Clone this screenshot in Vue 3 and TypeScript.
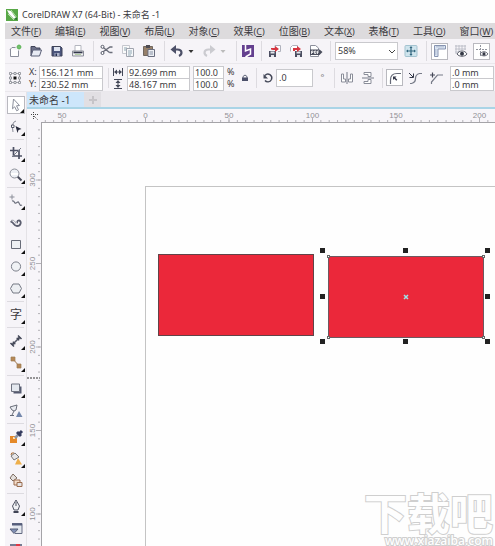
<script setup lang="ts">
import { computed, onBeforeUnmount, onMounted, ref } from 'vue'

interface Tool { label: string; icon: string; flyout?: boolean }
interface Action { label: string; icon: string; kind?: string }

const menus = [
  ['文件', 'F'], ['编辑', 'E'], ['视图', 'V'], ['布局', 'L'], ['对象', 'C'], ['效果', 'C'],
  ['位图', 'B'], ['文本', 'X'], ['表格', 'T'], ['工具', 'O'], ['窗口', 'W'],
]

const ink = '#3f4358'
const icons: Record<string, string> = {
  fresh: `<path d="M4 7.500l2-2h3.500M4.500 7v7.500h8V8.500" fill="#fff" stroke="#8b8e9b"/><circle cx="13" cy="5" r="2.200" fill="#4fae4c"/><path d="M13 2v6M10 5h6" stroke="#8fcb88" stroke-width=".7"/>`,
  open: `<path d="M4 14V4.500h4l1 1.500h4v2" fill="#6c7088" stroke="${ink}"/><path d="M4 14l2-6h8.500l-2 6z" fill="#e8ebf4" stroke="#5b6078"/>`,
  save: `<path d="M4 4.500h8.500L14 6v8H4z" fill="#4b557c" stroke="${ink}"/><path d="M6 5h6v4H6z" fill="#dfe4f0"/><path d="M6.500 11h5v3h-5z" fill="#aab1c7"/><path d="M7.500 11.500h1.500V14H7.500z" fill="#222c50"/>`,
  print: `<path d="M6 9V3.500h6V9" fill="#fff" stroke="#b4b6bf"/><path d="M3.500 9h11v5h-11z" fill="#f0f0f2" stroke="#8b8e99"/><path d="M4.500 10.500h9" stroke="#33384a" stroke-width="1.600"/><path d="M6 12.500h6" stroke="#b5cfa2"/>`,
  cut: `<path d="M4 4.500l7.500 6M4 10.500l8-5.500h2.500M11.500 10.500h3" stroke="#6a6d79" stroke-width="1.400" fill="none"/><circle cx="4.500" cy="4.800" r="1.500" fill="#fff" stroke="#555968"/><circle cx="4.500" cy="11" r="1.500" fill="#fff" stroke="#555968"/>`,
  copy: `<path d="M3.500 3.500h7v8h-7z" fill="#fafafa" stroke="#c5c7ce"/><path d="M7.500 6.500h7v8h-7z" fill="#f7f8fa" stroke="#a0a4ae"/><path d="M5 6h3M5 8h2M9 9h4M9 11h4M9 13h3" stroke="#8fa7b4"/>`,
  paste: `<path d="M3.500 4.500h9v9h-9z" fill="#96806a" stroke="#70675f"/><path d="M6 3h4v3H6z" fill="#4e4c52"/><path d="M8 7.500h6.500v7H8z" fill="#eef0f4" stroke="#696d7e"/><path d="M9.500 10H13M9.500 12H13" stroke="#8791a5"/>`,
  undo: `<path d="M4.500 7.500h5c5 0 5 5 1.500 6.500" fill="none" stroke="#4c5068" stroke-width="2.200"/><path d="M8 3v9L2.500 7.500z" fill="#4c5068"/>`,
  redo: `<path d="M13.500 7.500h-5c-5 0-5 5-1.500 6.500" fill="none" stroke="#cbcbd0" stroke-width="2.200"/><path d="M10 3v9l5.500-4.500z" fill="#cbcbd0"/>`,
  caret: `<path d="M6.500 8h5L9 11z" fill="#333"/>`,
  caretOff: `<path d="M6.500 8h5L9 11z" fill="#bbb"/>`,
  connect: `<path d="M3 3h12v12H3z" fill="#64408f"/><path d="M6.500 3v6l5-2v5l-5 3" stroke="#fff" fill="none" stroke-width="1.500"/>`,
  load: `<path d="M9 8V3.500h5.500v6H12" fill="#fff" stroke="#b0b2bd"/><path d="M3 9h7v6H3z" fill="#4b4e61"/><path d="M4.500 9.500h4v2h-4zM5 13h3v2H5z" fill="#e4e6ec"/><path d="M5 7.500V6h4V4l4 3-4 3V8H7" fill="#d73640"/>`,
  export: `<path d="M3.500 9.500v-4l2-2h5v5" fill="#fff" stroke="#b0b2bd"/><path d="M8 9h7v6H8z" fill="#4b4e61"/><path d="M9.500 9.500h4v2h-4zM10 13h3v2h-3z" fill="#e4e6ec"/><path d="M6 9V6h4V4l4 3-4 3V8H8v1z" fill="#d73640"/>`,
  pdf: `<path d="M3.500 14.500v-11h5l3 2.500v8.500z" fill="#fff" stroke="#8b8e9b"/><path d="M3 7.500h9.500L15.500 10l-3 3H3z" fill="#4a4d5c"/><path d="M4.500 12V9H6v1.500H4.500M7.500 9H9v2.500H7.500zM10.500 12V9H12M10.500 10.500h1" stroke="#fff" fill="none" stroke-width=".8"/>`,
  fit: `<rect x="3" y="3.500" width="12" height="11" rx="1" fill="#cfe4ed" stroke="#a3c3d0"/><path d="M9 5v8M5 9h8" stroke="#32677f" stroke-width="1.200"/><path d="M7.500 6L9 4l1.500 2zM7.500 12L9 14l1.500-2zM6 7.500L4 9l2 1.500zM12 7.500L14 9l-2 1.500z" fill="#32677f"/>`,
  rulers: `<path d="M3.500 3.500h11v3.500h-7.500v7.500H3.500z" fill="#dce6f3" stroke="#8793b0"/><path d="M6 3.500v2M8 3.500v2M10 3.500v2M12 3.500v2M3.500 8h2M3.500 10h2M3.500 12h2" stroke="#8793b0" stroke-width=".7"/>`,
  grid: `<path d="M3 4h11M3 7h11M3 10h6M4 3v9M7 3v9M10 3v5M13 3v5" stroke="#b5b8c2" stroke-width=".8" fill="none"/><path d="M5 12c2-4 8-4 10 0-2 3-8 3-10 0z" fill="#fff" stroke="#595c68"/><circle cx="10" cy="11.800" r="2" fill="#343845"/>`,
  guides: `<path d="M7.500 3v12M3 7.500h12" stroke="#92959f" stroke-dasharray="2 1" fill="none"/><path d="M7 12c2-3 6-3 8 0-2 2.500-6 2.500-8 0z" fill="#fff" stroke="#686b76"/><circle cx="11" cy="11.900" r="1.600" fill="#343845"/>`,
  origin: `<path d="M4.500 4.500h9v9h-9z" fill="none" stroke="#a6a8b0"/><g fill="#fff" stroke="#85888f" stroke-width=".8"><path d="M3.500 3.500h2v2h-2zM8 3.500h2v2H8zM12.500 3.500h2v2h-2zM3.500 8h2v2h-2zM12.500 8h2v2h-2zM3.500 12.500h2v2h-2zM8 12.500h2v2H8zM12.500 12.500h2v2h-2z"/></g><path d="M7.500 7.500h3v3h-3z" fill="#111"/>`,
  lock: `<path d="M7 9V7.500q2-3 4 0V9" fill="none" stroke="#62667a"/><path d="M6 8.500h6V12H6z" fill="#4c506a"/>`,
  rotate: `<path d="M6 6.500c3-3.500 8 0 6.500 4-1.500 3-5 3-6.500 1" fill="none" stroke="#444858" stroke-width="1.400"/><path d="M4.500 5v4.500H9z" fill="#444858"/>`,
  mirrorH: `<path d="M3.500 5v8h4v-3h-2V5zM14.500 5v8h-4v-3h2V5z" fill="#fff" stroke="#8a8d99"/><path d="M9 3v12" stroke="#777a88"/>`,
  mirrorV: `<path d="M5 3.500h7v4H9v-2H5zM5 14.500h7v-4H9v2H5z" fill="#fff" stroke="#8a8d99"/><path d="M3 9h12" stroke="#777a88"/>`,
  round: `<path d="M4.500 15v-4q0-6.500 6.500-6.500h4" fill="none" stroke="#666a78" stroke-width="1.200"/><path d="M7 7.500h3.500L9.300 8.700l2 2-1 1-2-2L7 11z" fill="#333748"/>`,
  scallop: `<path d="M4 14.500h1.500q4-1 4-5t4-5H16" fill="none" stroke="#777b88" stroke-width="1.200"/><path d="M3 4l4 4M7.500 4.500v4h-4" stroke="#333748" fill="none"/>`,
  chamfer: `<path d="M4.500 15v-2l6-7H16" fill="none" stroke="#777b88" stroke-width="1.200"/><path d="M3 6h5M5.500 3.500v5" stroke="#444858" stroke-width="1.200"/>`,
  width: `<path d="M4.500 5v8M13.500 5v8" stroke="#444858"/><path d="M5 9l3-2.500v2h2v-2L13 9l-3 2.500v-2H8v2z" fill="#444858"/>`,
  height: `<path d="M5 4.500h8M5 13.500h8" stroke="#444858"/><path d="M9 5l2.500 3h-2v2h2L9 13l-2.500-3h2V8h-2z" fill="#444858"/>`,
  pick: `<path d="M6.500 3l6 6.500-3 .3 2 4-1.800 1-2-4-2.200 2z" fill="#fff" stroke="#8b8f9c"/>`,
  shape: `<path d="M9 3Q4 4 6 14" fill="none" stroke="#8b8e99"/><path d="M4.500 7h2.500v2.500H4.500z" fill="#fff" stroke="#555968"/><path d="M8.500 8l6 3-3 1-1 3z" fill="#252839"/>`,
  crop: `<path d="M6.500 3v9H15M3 6.500h9V15" fill="none" stroke="#4d5164" stroke-width="1.700"/><path d="M5 13l9-9" stroke="#777b88"/>`,
  zoom: `<path d="M10.500 10.500l4 4" stroke="#454858" stroke-width="2"/><circle cx="7.500" cy="7.500" r="4.500" fill="#eceff4" stroke="#8d909a"/><path d="M4 8h7" stroke="#fff" stroke-width="2"/>`,
  freehand: `<path d="M5 2.500v5M2.500 5h5" stroke="#8b8e99"/><path d="M5 9c3-1 2 3 4 2s2-2 3 0 1 3 3 2" fill="none" stroke="#6b6f7c" stroke-width="1.200"/>`,
  artistic: `<path d="M3.500 8c3-1 3 4 6.500 4 4 0 5-5 2-5.500-2 0-2 2-1 2" fill="none" stroke="#5a5d6e" stroke-width="1.800"/><path d="M4 6.500c3-1 4 1 5 3" fill="none" stroke="#999ca7"/>`,
  rect: `<path d="M4.500 4.500h9v8h-9z" fill="#eef0f3" stroke="#686c78"/>`,
  ellipse: `<circle cx="9" cy="8.500" r="4.600" fill="#f0f2f5" stroke="#7c808b"/>`,
  polygon: `<path d="M6 4h6l2.500 4.500L12 13H6L3.500 8.500z" fill="#eceef2" stroke="#747883"/>`,
  dimension: `<path d="M5 13l8-8" stroke="#555968" stroke-width="1.600"/><path d="M3.500 11l3.500 3.500M11 3.500l3.500 3.500" stroke="#444858" stroke-width="1.500"/><path d="M5 13l1-4 3 3zM13 5l-4 1 3 3z" fill="#444858"/>`,
  connector: `<path d="M6 5l6 7" fill="none" stroke="#a3794e"/><path d="M4 3h4v4H4zM10 10h4v4h-4z" fill="#b68755" stroke="#9c7b55" stroke-width=".7"/>`,
  shadow: `<path d="M6.500 6.500h8v7h-8z" fill="#555a70"/><path d="M4.500 4h8v7.500h-8z" fill="#e4e8ef" stroke="#6e7280"/>`,
  transparent: `<path d="M3 5l7-2-1 5q-2 2-4 0zM7 9l-2 4M3 13.500h4" fill="#e8eaf0" stroke="#686c78"/><path d="M12 9l3.500 6H9z" fill="#7487ab"/>`,
  dropper: `<path d="M3 8h7v7H3z" fill="#e58929"/><path d="M6 9h2v2H6z" fill="#ffe1b3"/><path d="M8 10l4-4" stroke="#8d94a3" stroke-width="2.500"/><path d="M10 4l4 4M12 6l3-3" stroke="#363d5f" stroke-width="3"/>`,
  fill: `<path d="M4 6l4-3 4 4-5 3z" fill="#e7e6e8" stroke="#777"/><path d="M4 5q0-3 3-2" stroke="#a56b35" fill="none"/><path d="M11 8l4 6.500H8z" fill="#eeaf4b"/>`,
  smart: `<path d="M3 6l3-4 4 4-4 3z" fill="#e3dfdd" stroke="#7e6d61"/><path d="M7 8h6v5H7z" fill="#f4ddca" stroke="#9b6d4e"/><path d="M10 10.500h5v4h-5z" fill="#e6e4e6" stroke="#9b6d4e"/>`,
  pen: `<path d="M9 2l3.500 6-1.500 4H7L5.500 8z" fill="#f0f1f4" stroke="#515564"/><path d="M9 4v4" stroke="#515564"/><path d="M6.500 13h5v2h-5z" fill="#3f4354"/>`,
  gradient: `<path d="M5 3.500h10v10H8" fill="#e3e7ee" stroke="#646b83"/><path d="M5 4.500h10" stroke="#555d7b" stroke-width="2"/><path d="M3 9h8l-4 4.500z" fill="#8190b4" stroke="#59617a"/>`,
  mesh: `<path d="M3 2h12v10H3z" fill="#767b91"/><path d="M9 2h4v4H9z" fill="#de3845"/>`,
}

const fileActions: Action[][] = [
  [{ label: '新建', icon: 'fresh' }, { label: '打开', icon: 'open' }, { label: '保存', icon: 'save' }, { label: '打印', icon: 'print' }],
  [{ label: '剪切', icon: 'cut' }, { label: '复制', icon: 'copy' }, { label: '粘贴', icon: 'paste' }],
  [{ label: '撤消', icon: 'undo', kind: 'narrow' }, { label: '撤消列表', icon: 'caret', kind: 'drop' },
    { label: '重做', icon: 'redo', kind: 'narrow' }, { label: '重做列表', icon: 'caretOff', kind: 'drop' }],
  [{ label: '搜索内容', icon: 'connect', kind: 'slim' }],
  [{ label: '导入', icon: 'load' }, { label: '导出', icon: 'export' }, { label: '发布为 PDF', icon: 'pdf', kind: 'narrow' }],
]
const viewActions: Action[] = [
  { label: '显示标尺', icon: 'rulers', kind: 'framed' }, { label: '显示网格', icon: 'grid' }, { label: '显示辅助线', icon: 'guides', kind: 'framed' },
]
const tools: Tool[][] = [
  [{ label: '选择', icon: 'pick', flyout: true }, { label: '形状', icon: 'shape', flyout: true }],
  [{ label: '裁剪', icon: 'crop', flyout: true }, { label: '缩放', icon: 'zoom', flyout: true }],
  [{ label: '手绘', icon: 'freehand', flyout: true }, { label: '艺术笔', icon: 'artistic' }, { label: '矩形', icon: 'rect', flyout: true },
    { label: '椭圆形', icon: 'ellipse', flyout: true }, { label: '多边形', icon: 'polygon', flyout: true }],
  [{ label: '文本', icon: 'text', flyout: true }],
  [{ label: '度量', icon: 'dimension', flyout: true }, { label: '连接器', icon: 'connector', flyout: true }],
  [{ label: '阴影', icon: 'shadow', flyout: true }, { label: '透明度', icon: 'transparent' }],
  [{ label: '滴管', icon: 'dropper', flyout: true }, { label: '填充', icon: 'fill', flyout: true }, { label: '智能填充', icon: 'smart' }],
  [{ label: '轮廓笔', icon: 'pen', flyout: true }, { label: '编辑填充', icon: 'gradient' }, { label: '网状填充', icon: 'mesh' }],
]

// Ruler scale: 50 mm spans 83.5 px at the current zoom level.
const step = 83.5
const left = 21
const top = 58
const view = ref({ width: window.innerWidth - 41, height: window.innerHeight - 122 })
const measure = () => { view.value = { width: window.innerWidth - 41, height: window.innerHeight - 122 } }
onMounted(() => window.addEventListener('resize', measure))
onBeforeUnmount(() => window.removeEventListener('resize', measure))

const range = (count: number) => Array.from({ length: Math.max(0, count) }, (_, i) => i)
const across = computed(() => range(Math.ceil((view.value.width - left) / step)).map(i => ({ at: left + i * step, mm: Math.abs(i - 1) * 50 })))
const down = computed(() => range(Math.ceil((view.value.height - top) / step)).map(i => ({ at: top + i * step, mm: Math.abs(300 - i * 50) })))
const minorX = computed(() => range(Math.ceil(view.value.width / step * 10)).map(i => left + (i - 2) * step / 10))
const minorY = computed(() => range(Math.ceil(view.value.height / step * 10)).map(i => top + (i - 6) * step / 10))

const zoomLevel = ref('58%')
const x = ref('156.121 mm')
const y = ref('230.52 mm')
const w = ref('92.699 mm')
const h = ref('48.167 mm')
const sx = ref('100.0')
const sy = ref('100.0')
const angle = ref('.0')
const r1 = ref('.0 mm')
const r2 = ref('.0 mm')
</script>

<template>
  <div class="app">
    <header class="title">
      <svg class="logo" viewBox="0 0 12 12"><path d="M0 0h12v12H0z" fill="#58a847" /><path d="M1 1l4 1 5 7-2 1-5-5z" fill="#fff" /><path d="M5 1l6 8M2 5l6 6" stroke="#b9dfac" /><path d="M8 10l3 1V8z" fill="#2d7532" /></svg>
      <span>CorelDRAW X7 (64-Bit) - 未命名 -1</span>
    </header>

    <nav class="menu">
      <button v-for="m in menus" :key="m[0]" type="button">{{ m[0] }}<span class="key">(<u>{{ m[1] }}</u>)</span></button>
    </nav>

    <div class="toolbar" role="toolbar">
      <template v-for="(group, g) in fileActions" :key="g">
        <button v-for="a in group" :key="a.icon" type="button" class="act" :class="a.kind" :aria-label="a.label">
          <svg viewBox="0 0 18 18" v-html="icons[a.icon]"></svg>
        </button>
        <i class="sep"></i>
      </template>
      <span class="combo">
        <select v-model="zoomLevel" aria-label="缩放级别"><option>58%</option><option>100%</option></select>
        <svg viewBox="0 0 8 6"><path d="M1 1l3 3 3-3" /></svg>
      </span>
      <button type="button" class="act" aria-label="全屏预览"><svg viewBox="0 0 18 18" v-html="icons.fit"></svg></button>
      <i class="sep"></i>
      <button v-for="a in viewActions" :key="a.icon" type="button" class="act" :class="a.kind" :aria-label="a.label">
        <svg viewBox="0 0 18 18" v-html="icons[a.icon]"></svg>
      </button>
    </div>

    <div class="props">
      <button type="button" class="act" aria-label="对象原点"><svg viewBox="0 0 18 18" v-html="icons.origin"></svg></button>
      <div class="pair coords">
        <label for="px">X:</label><input id="px" v-model="x">
        <label for="py">Y:</label><input id="py" v-model="y">
      </div>
      <i class="sep"></i>
      <div class="pair size">
        <label for="pw" aria-label="宽度"><svg viewBox="3 3 12 12" v-html="icons.width"></svg></label><input id="pw" v-model="w">
        <label for="ph" aria-label="高度"><svg viewBox="3 3 12 12" v-html="icons.height"></svg></label><input id="ph" v-model="h">
      </div>
      <div class="pair scale">
        <input id="sx" v-model="sx"><label for="sx">%</label>
        <input id="sy" v-model="sy"><label for="sy">%</label>
      </div>
      <button type="button" class="act lock" aria-label="锁定比率"><svg viewBox="0 0 18 18" v-html="icons.lock"></svg></button>
      <i class="sep"></i>
      <div class="turn">
        <label for="angle" class="act" aria-label="旋转角度"><svg viewBox="0 0 18 18" v-html="icons.rotate"></svg></label>
        <input id="angle" v-model="angle" class="angle">
      </div>
      <span class="degree">°</span>
      <i class="sep"></i>
      <button type="button" class="act wide" aria-label="水平镜像"><svg viewBox="0 0 18 18" v-html="icons.mirrorH"></svg></button>
      <button type="button" class="act wide" aria-label="垂直镜像"><svg viewBox="0 0 18 18" v-html="icons.mirrorV"></svg></button>
      <i class="sep"></i>
      <button type="button" class="act framed" aria-label="圆角"><svg viewBox="0 0 18 18" v-html="icons.round"></svg></button>
      <button type="button" class="act wide" aria-label="扇形角"><svg viewBox="0 0 18 18" v-html="icons.scallop"></svg></button>
      <button type="button" class="act wide" aria-label="倒棱角"><svg viewBox="0 0 18 18" v-html="icons.chamfer"></svg></button>
      <div class="pair radius">
        <input v-model="r1" aria-label="左上转角半径">
        <input v-model="r2" aria-label="左下转角半径">
      </div>
    </div>

    <div class="work">
      <aside class="tools">
        <div v-for="(group, g) in tools" :key="g" class="group">
          <button v-for="t in group" :key="t.icon" type="button" class="tool" :class="{ framed: t.icon === 'pick', flyout: t.flyout }" :aria-label="t.label">
            <span v-if="t.icon === 'text'" class="char">字</span>
            <svg v-else viewBox="0 0 18 18" v-html="icons[t.icon]"></svg>
          </button>
        </div>
      </aside>

      <main class="document">
        <div class="tabs">
          <button type="button" class="tab">未命名 -1</button>
          <button type="button" class="add" aria-label="新建文档"><svg viewBox="0 0 10 10"><path d="M5 1v8M1 5h8" /></svg></button>
        </div>
        <div class="stage">
          <div class="corner"><svg viewBox="0 0 12 12"><path d="M3 4.500h7M5.500 2v7M6 6l4 4" /></svg></div>
          <svg class="ruler">
            <line v-for="m in minorX" :key="m" :x1="m" :x2="m" y1="11" y2="13" />
            <g v-for="t in across" :key="t.at">
              <line :x1="t.at" :x2="t.at" y1="9" y2="13" />
              <text :x="t.at" y="9">{{ t.mm }}</text>
            </g>
          </svg>
          <div class="side">
            <svg class="ruler">
              <line v-for="m in minorY" :key="m" x1="11" x2="13" :y1="m" :y2="m" />
              <g v-for="t in down" :key="t.at">
                <line x1="9" x2="14" :y1="t.at" :y2="t.at" />
                <text x="8" :y="t.at" :transform="`rotate(-90 8 ${t.at})`">{{ t.mm }}</text>
              </g>
              <line class="cursor" x1="0" x2="13" y1="256" y2="256" />
            </svg>
          </div>
          <div class="canvas">
            <div class="page"></div>
            <div class="shape first"></div>
            <div class="shape second">
              <svg class="center" viewBox="0 0 6 6"><path d="M1 1l4 4M5 1L1 5" /></svg>
              <i class="node nw"></i><i class="node ne"></i><i class="node sw"></i><i class="node se"></i>
            </div>
            <div class="selection">
              <i v-for="n in 9" :key="n" :class="{ blank: n === 5 }"></i>
            </div>
            <div class="mark">
              <span class="name">下载吧</span>
              <span class="site">www.xiazaiba.com</span>
            </div>
          </div>
        </div>
      </main>
    </div>
  </div>
</template>

<style>
body { background: #fff; }
</style>

<style scoped>
* { box-sizing: border-box; }
.app {
  display: flex; flex-direction: column; height: 100vh; padding-left: 5px; overflow: hidden;
  background: #fefefe; color: #3b3a40; font: 10px/12px "Noto Sans", "Noto Sans CJK SC", sans-serif;
}
button { padding: 0; border: 0; background: none; color: inherit; font: inherit; }
input, select { min-width: 0; border: 1px solid #c9c9cd; border-radius: 0; background: #fff; color: #3b3a40; font: inherit; outline: 0; }
svg { display: block; }
.title { display: flex; flex: none; align-items: flex-end; gap: 4px; height: 23px; padding: 0 1px 2px; font-size: 9px; white-space: nowrap; }
.logo { width: 12px; height: 12px; }
.menu { display: flex; flex: none; gap: 14px; height: 16px; padding-left: 6px; background: #dddbdd; white-space: nowrap; }
.menu button { flex: none; line-height: 16px; }
.key { font-size: 9px; }
.toolbar, .props { display: flex; flex: none; align-items: center; padding-left: 1px; background: #f6f4f8; border-bottom: 1px solid #eae8ec; font-size: 9px; white-space: nowrap; }
.toolbar { gap: 4px; height: 25px; }
.props { gap: 3px; height: 28px; }
.act { display: flex; flex: none; align-items: center; justify-content: center; width: 17px; height: 17px; }
.act svg { flex: none; width: 18px; height: 18px; }
.narrow { width: 15px; }
.slim, .lock { width: 13px; }
.wide { width: 18px; }
.drop { width: 5px; margin-right: 4px; }
.framed { border: 1px solid #b9b9bf; background: #fff; }
.sep { flex: none; width: 1px; height: 20px; margin-left: 3px; background: #dddbe0; }
.props .sep { margin-left: 2px; }
.combo { position: relative; flex: none; width: 63px; height: 18px; }
.combo select { width: 100%; height: 100%; padding: 0 2px; appearance: none; }
.combo svg { position: absolute; right: 2px; top: 7px; width: 8px; height: 6px; fill: none; stroke: #444; }
.pair { display: grid; flex: none; grid-auto-rows: 12px; align-items: stretch; }
.pair input { width: 100%; height: 13px; padding: 0 1px; }
.pair label { display: flex; align-items: center; }
.coords { grid-template-columns: 10px 64px; margin-left: 3px; }
.size { grid-template-columns: 15px 63px; }
.size svg { width: 12px; height: 12px; }
.scale { grid-template-columns: 31px 8px; column-gap: 3px; }
.turn { display: flex; flex: none; align-items: center; }
.turn .act { width: 16px; }
.angle { width: 37px; height: 18px; padding: 0 2px; }
.degree { flex: none; width: 13px; color: #777; text-align: center; }
.pair.radius { flex: 0 1 44px; margin-left: 2px; }
.work { display: flex; flex: 1; min-height: 0; }
.tools { flex: none; width: 22px; padding: 0 2px; overflow: hidden; background: #f6f4f8; border-right: 1px solid #e4e2e6; }
.group { display: flex; flex-direction: column; gap: 4px; padding: 4px 0 3px; border-bottom: 1px solid #dddbe0; }
.tool { position: relative; display: flex; flex: none; align-items: center; justify-content: center; width: 18px; height: 18px; }
.tool svg { flex: none; width: 18px; height: 18px; }
.flyout::after { content: ""; position: absolute; right: 0; bottom: 0; border: 2px solid; border-color: transparent #111 #111 transparent; }
.char { font-size: 12px; line-height: 16px; }
.document { display: flex; flex: 1; flex-direction: column; min-width: 0; }
.tabs { display: flex; flex: none; height: 17px; background: #ebe9ed; border-bottom: 2px solid #a9d4e6; }
.tab { width: 57px; padding-left: 2px; background: #cde6fb; text-align: left; white-space: nowrap; }
.add { display: flex; align-items: center; justify-content: center; width: 17px; background: #e1dfe3; }
.add svg { width: 10px; height: 10px; stroke: #c6c4c8; stroke-width: 2; }
.stage { display: grid; flex: 1; grid-template: 13px minmax(0, 1fr) / 14px minmax(0, 1fr); min-height: 0; background: #f7f5f9; }
.corner svg { width: 12px; height: 12px; margin: 1px; fill: none; stroke: #444; stroke-dasharray: 1 1; }
.ruler { width: 100%; height: 100%; stroke: #b3b2b7; stroke-width: 1; overflow: hidden; }
.ruler text { fill: #929196; stroke: none; font-family: "Liberation Sans", sans-serif; font-size: 8px; text-anchor: middle; }
.side { min-height: 0; overflow: hidden; }
.ruler .cursor { stroke: #333; stroke-dasharray: 2 1; }
.canvas { position: relative; overflow: hidden; border-top: 1px solid #a5a4a8; border-left: 1px solid #a5a4a8; background: #fefefe; }
.page { position: absolute; left: 103px; top: 63px; right: -1px; bottom: -1px; border: 1px solid #c4c4c4; }
.shape { position: absolute; width: 156px; height: 82px; border: 1px solid #614348; background: #eb283a; }
.first { left: 116px; top: 131px; }
.second { left: 286px; top: 133px; border-color: #6d5960; }
.center { position: absolute; left: 74px; top: 37px; width: 6px; height: 6px; stroke: #9ce5ea; stroke-width: 1.500; }
.node { position: absolute; width: 3px; height: 3px; border: 1px solid #666; background: #fff; }
.nw { left: -2px; top: -2px; }
.ne { right: -2px; top: -2px; }
.sw { left: -2px; bottom: -2px; }
.se { right: -2px; bottom: -2px; }
.selection { position: absolute; left: 278px; top: 125px; display: grid; grid-template-columns: repeat(3, 5px); align-content: space-between; justify-content: space-between; width: 170px; height: 96px; }
.selection i { width: 5px; height: 5px; background: #222; }
.selection .blank { visibility: hidden; }
.mark { position: absolute; right: 2px; bottom: -2px; display: flex; flex-direction: column; align-items: flex-end; color: #fefefe; -webkit-text-stroke: 2px #cfcfcf; paint-order: stroke fill; white-space: nowrap; }
.name { font: 700 43px/46px "Noto Sans CJK SC", sans-serif; }
.site { font: 600 12px/14px "Open Sans", sans-serif; }
</style>
